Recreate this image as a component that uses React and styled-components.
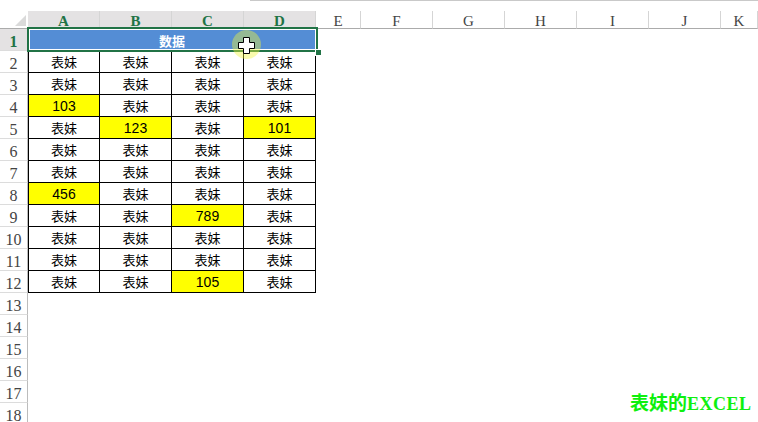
import React from 'react';
import styled, { createGlobalStyle } from 'styled-components';

const GlobalStyle = createGlobalStyle`
  html, body {
    margin: 0;
    padding: 0;
    background: #fff;
  }
  * { box-sizing: border-box; }
`;

const COLS = '28px repeat(4, 72px) 45px repeat(5, 72px) 1fr';
const LETTERS = ['A', 'B', 'C', 'D', 'E', 'F', 'G', 'H', 'I', 'J', 'K'];
const W = '表妹';

const DATA = [
  [W, W, W, W],
  [W, W, W, W],
  ['103', W, W, W],
  [W, '123', W, '101'],
  [W, W, W, W],
  [W, W, W, W],
  ['456', W, W, W],
  [W, W, '789', W],
  [W, W, W, W],
  [W, W, W, W],
  [W, W, '105', W],
];

const HEAD_FONT = '"Liberation Serif", "Times New Roman", serif';

const Page = styled.div`
  position: relative;
  width: 758px;
  height: 422px;
  overflow: hidden;
  background: #fff;
`;

const TopStrip = styled.div`
  height: 11px;
  padding-left: 250px;
  div {
    height: 1px;
    background: #c9c9c9;
  }
`;

const Grid = styled.div`
  display: grid;
  grid-template-columns: ${COLS};
  grid-template-rows: ${p => p.$h}px;
  height: ${p => p.$h}px;
`;

const Corner = styled.div`
  position: relative;
  border-bottom: 1px solid #ababab;
  &::after {
    content: '';
    position: absolute;
    right: 2px;
    bottom: 2px;
    width: 0;
    height: 0;
    border-left: 11px solid transparent;
    border-bottom: 11px solid #dadada;
  }
`;

const ColHead = styled.div`
  display: flex;
  align-items: center;
  justify-content: center;
  overflow: hidden;
  background: ${p => (p.$sel ? '#e4e2e3' : '#fff')};
  border-right: 1px solid #d5d5d5;
  border-bottom: 1px solid #ababab;
  color: ${p => (p.$sel ? '#217346' : '#444')};
  font-family: ${HEAD_FONT};
  font-weight: ${p => (p.$sel ? 'bold' : 'normal')};
  font-size: 15px;
  line-height: 1;
  padding-top: 3px;
`;

const RowHead = styled.div`
  display: flex;
  align-items: center;
  justify-content: center;
  overflow: hidden;
  background: ${p => (p.$sel ? '#e4e2e3' : '#fff')};
  border-right: 1px solid #bcbcbc;
  border-bottom: 1px solid #dcdcdc;
  color: ${p => (p.$sel ? '#217346' : '#444')};
  font-family: ${HEAD_FONT};
  font-weight: ${p => (p.$sel ? 'bold' : 'normal')};
  font-size: 16px;
  line-height: 1;
  padding-top: 4px;
`;

const Cell = styled.div`
  display: flex;
  align-items: center;
  justify-content: center;
  overflow: hidden;
  background: ${p => (p.$hl ? '#ffff00' : '#fff')};
  border-right: 1px solid #000;
  border-bottom: 1px solid #000;
  border-left: ${p => (p.$first ? '1px solid #000' : 'none')};
  color: #000;
  font-family: ${p => (p.$num ? '"Liberation Sans", Arial' : '"Noto Sans CJK SC"')}, sans-serif;
  font-size: ${p => (p.$num ? '14px' : '13px')};
  line-height: 1;
`;

const Merged = styled.div`
  position: relative;
  grid-column: span 4;
  display: flex;
  align-items: center;
  justify-content: center;
  background: #548dd5;
  color: #fff;
  font-family: "Noto Sans CJK SC", sans-serif;
  font-weight: bold;
  font-size: 13px;
  line-height: 1;
`;

const Selection = styled.div`
  position: absolute;
  left: -1px;
  top: -2px;
  right: -2px;
  bottom: -1px;
  border: 2px solid #217346;
  box-shadow: inset 0 0 0 1px #fff;
  pointer-events: none;
`;

const Handle = styled.div`
  position: absolute;
  right: -6px;
  bottom: -6px;
  width: 7px;
  height: 7px;
  background: #217346;
  border: 1px solid #fff;
`;

const Blank = styled.div``;

const Halo = styled.div`
  position: absolute;
  left: 232px;
  top: 30px;
  width: 29px;
  height: 29px;
  border-radius: 50%;
  background: rgba(240, 245, 60, 0.42);
`;

const Pointer = styled.svg`
  position: absolute;
  left: 238px;
  top: 37px;
`;

const Watermark = styled.div`
  position: absolute;
  left: 630px;
  top: 388px;
  color: #0ef00e;
  font-family: "Noto Sans CJK SC", sans-serif;
  font-weight: bold;
  font-size: 19px;
  white-space: nowrap;
  span {
    font-family: "Liberation Serif", serif;
    font-size: 18px;
    letter-spacing: 0.5px;
  }
`;

const isNum = v => /^\d+$/.test(v);

export default function App() {
  return (
    <Page>
      <GlobalStyle />
      <TopStrip><div /></TopStrip>
      <Grid $h={18}>
        <Corner />
        {LETTERS.map((l, i) => (
          <ColHead key={l} $sel={i < 4}>{l}</ColHead>
        ))}
      </Grid>
      <Grid $h={22}>
        <RowHead $sel>1</RowHead>
        <Merged>
          数据
          <Selection>
            <Handle />
          </Selection>
        </Merged>
      </Grid>
      {DATA.map((row, r) => (
        <Grid key={r} $h={22}>
          <RowHead>{r + 2}</RowHead>
          {row.map((v, c) => (
            <Cell key={c} $first={c === 0} $hl={isNum(v)} $num={isNum(v)}>{v}</Cell>
          ))}
        </Grid>
      ))}
      {[13, 14, 15, 16, 17, 18].map(n => (
        <Grid key={n} $h={22}>
          <RowHead>{n}</RowHead>
          <Blank />
        </Grid>
      ))}
      <Halo />
      <Pointer width="17" height="17" viewBox="0 0 17 17">
        <path
          d="M5.5 0.5h6v5h5v6h-5v5h-6v-5h-5v-6h5z"
          fill="#fff"
          stroke="#000"
          strokeWidth="1"
        />
      </Pointer>
      <Watermark>表妹的<span>EXCEL</span></Watermark>
    </Page>
  );
}
